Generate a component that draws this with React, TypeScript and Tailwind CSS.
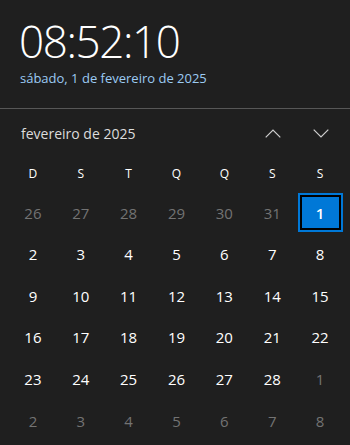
import React from "react";

const prev = [26, 27, 28, 29, 30, 31];
type Cell = { n: number; cur: boolean; sel?: boolean };

function buildCells(): Cell[] {
  const cells: Cell[] = [];
  prev.forEach((n) => cells.push({ n, cur: false }));
  for (let i = 1; i <= 28; i++) cells.push({ n: i, cur: true, sel: i === 1 });
  for (let i = 1; i <= 8; i++) cells.push({ n: i, cur: false });
  return cells;
}

export default function App() {
  const cells = buildCells();
  const heads = ["D", "S", "T", "Q", "Q", "S", "S"];
  return (
    <div
      className="w-[350px] h-[445px] bg-[#1f1f1f] overflow-hidden flex flex-col"
      style={{ fontFamily: '"Segoe UI", "Open Sans", "Noto Sans", sans-serif' }}
    >
      <div className="pl-[19px] pt-[16px]">
        <div className="text-[44px] leading-[50px] font-light text-white tracking-[-1.4px]">
          08:52:10
        </div>
        <div className="mt-[3px] pl-[1px] text-[13px] leading-[18px] text-[#9ccbf3]">
          sábado, 1 de fevereiro de 2025
        </div>
      </div>
      <div className="mt-[21px] h-px bg-[#575757]" />
      <div className="h-[48px] flex items-center pl-[21px] pr-[21px]">
        <div className="flex-1 text-[14px] text-[#dcdcdc]">fevereiro de 2025</div>
        <svg width="16" height="9" viewBox="0 0 16 9" className="mr-[32px]">
          <path d="M0.7 8.3 L8 1 L15.3 8.3" fill="none" stroke="#cfcfcf" strokeWidth="1.2" />
        </svg>
        <svg width="16" height="9" viewBox="0 0 16 9">
          <path d="M0.7 0.7 L8 8 L15.3 0.7" fill="none" stroke="#cfcfcf" strokeWidth="1.2" />
        </svg>
      </div>
      <div className="pl-[9px] pr-[6px]">
        <div className="grid grid-cols-7 h-[35px] pt-[8px]">
          {heads.map((h, i) => (
            <div key={i} className="text-center text-[12px] leading-[17px] text-white">
              {h}
            </div>
          ))}
        </div>
        <div className="grid grid-cols-7 auto-rows-[41.6px]">
          {cells.map((c, i) =>
            c.sel ? (
              <div key={i} className="flex items-center justify-center">
                <div className="w-[45px] h-[39px] border-2 border-[#0078d7]">
                  <div className="w-full h-full border-2 border-black bg-[#0078d7] flex items-center justify-center text-white text-[15px] font-semibold">
                    {c.n}
                  </div>
                </div>
              </div>
            ) : (
              <div
                key={i}
                className={`flex items-center justify-center text-[15px] ${
                  c.cur ? "text-white" : "text-[#737373]"
                }`}
              >
                {c.n}
              </div>
            )
          )}
        </div>
      </div>
    </div>
  );
}
